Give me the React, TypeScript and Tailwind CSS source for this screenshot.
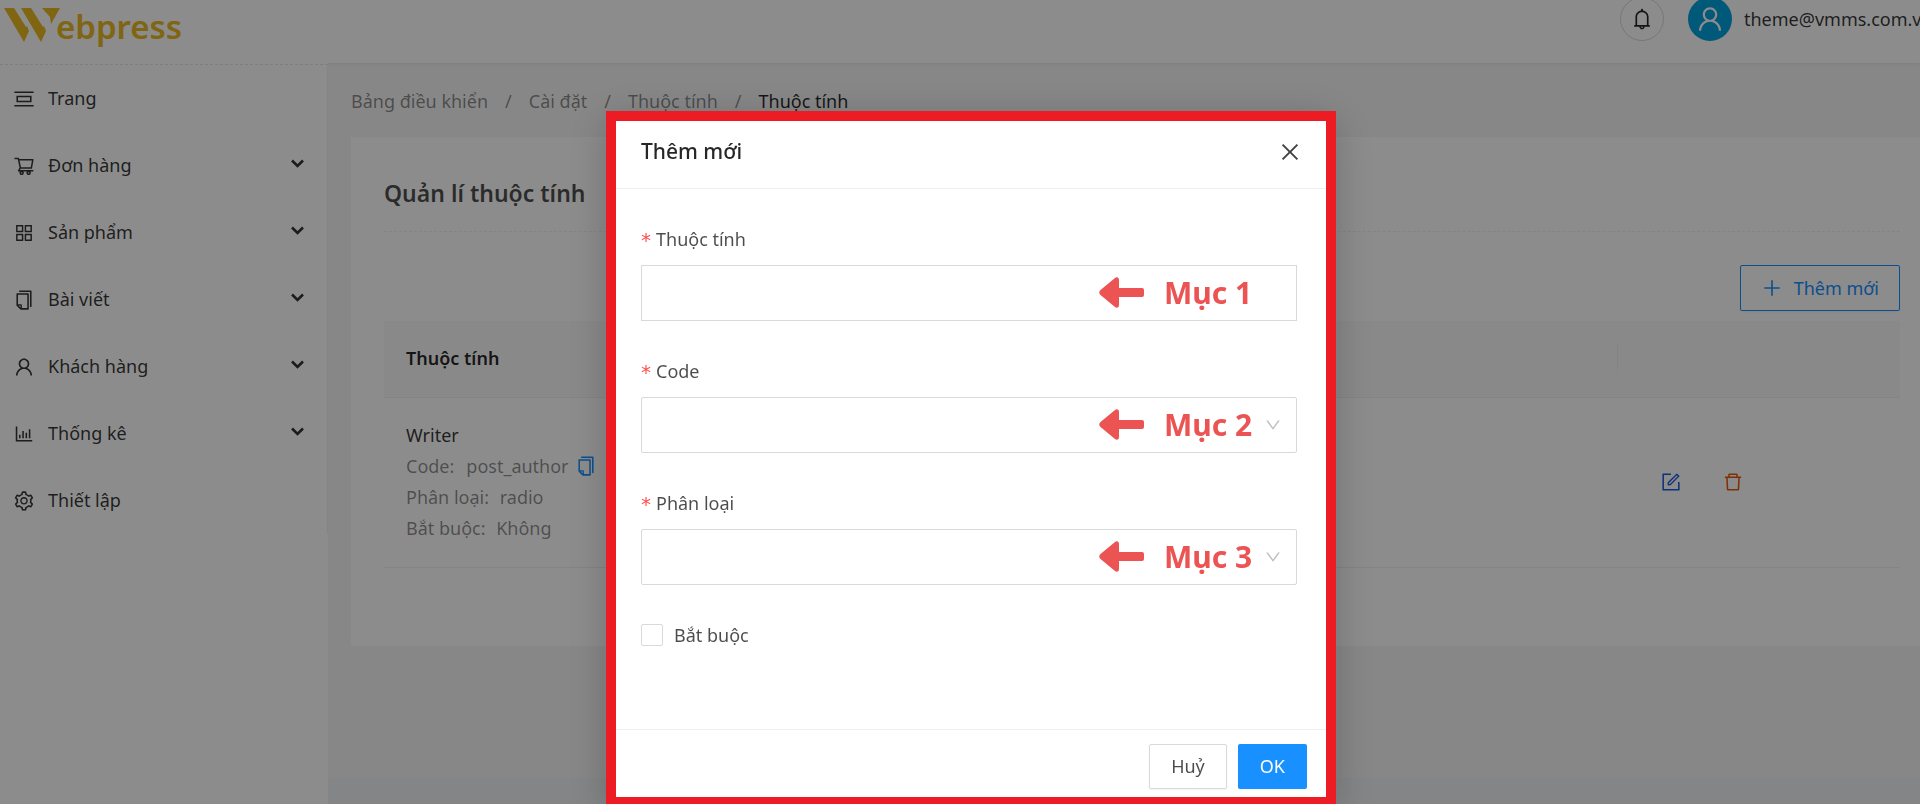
import type { ReactNode } from "react";
import type { IconType } from "react-icons";
import {
  AiOutlineAppstore,
  AiOutlineBarChart,
  AiOutlineBell,
  AiOutlineClose,
  AiOutlineCopy,
  AiOutlineDelete,
  AiOutlineDown,
  AiOutlineForm,
  AiOutlinePicCenter,
  AiOutlinePlus,
  AiOutlineSetting,
  AiOutlineShoppingCart,
  AiOutlineUser,
} from "react-icons/ai";

type MenuItem = { label: string; icon: IconType; hasChildren?: boolean };

const menu: MenuItem[] = [
  { label: "Trang", icon: AiOutlinePicCenter },
  { label: "Đơn hàng", icon: AiOutlineShoppingCart, hasChildren: true },
  { label: "Sản phẩm", icon: AiOutlineAppstore, hasChildren: true },
  { label: "Bài viết", icon: AiOutlineCopy, hasChildren: true },
  { label: "Khách hàng", icon: AiOutlineUser, hasChildren: true },
  { label: "Thống kê", icon: AiOutlineBarChart, hasChildren: true },
  { label: "Thiết lập", icon: AiOutlineSetting },
];

const crumbs = ["Bảng điều khiển", "Cài đặt", "Thuộc tính"];

function Logo() {
  return (
    <a href="#" className="flex items-start pt-1 pl-1 text-[#e9b824]">
      <svg width="56" height="36" viewBox="0 0 56 36" className="mt-1 -mr-1 shrink-0" fill="currentColor">
        <path d="M0 0H10L22 19L23 18L25 23L20 34Z" />
        <path d="M17 0H27L39 19L40 18L42 23L37 34Z" />
        <path d="M38 0H56L47 16L46 9Z" />
      </svg>
      <span className="text-[33px] leading-[46px] font-semibold">ebpress</span>
    </a>
  );
}

function Header() {
  return (
    <header className="relative z-10 flex h-[63px] justify-between bg-white shadow-[0_1px_4px_rgba(0,21,41,0.08)]">
      <Logo />
      <div className="flex h-[38px] items-center">
        <button
          type="button"
          aria-label="Thông báo"
          className="flex size-11 items-center justify-center rounded-full border border-[#d9d9d9] text-black/85"
        >
          <AiOutlineBell className="size-6" />
        </button>
        <span className="ml-6 flex size-11 items-center justify-center rounded-full bg-[#00a2dc] text-white">
          <AiOutlineUser className="size-[30px]" />
        </span>
        <span className="ml-3 w-44 text-[18px] whitespace-nowrap text-black/80">theme@vmms.com.v</span>
      </div>
    </header>
  );
}

function Sidebar() {
  return (
    <nav className="relative z-10 w-[328px] shrink-0 bg-white pt-px">
      <ul className="border-t border-r border-t-[#e6e6e6] border-r-[#f0f0f0] [border-top-style:dashed]">
        {menu.map(({ label, icon: Icon, hasChildren }) => (
          <li key={label}>
            <a href="#" className="flex h-[67px] items-center pr-[23px] pl-[13px] text-[18px] text-black/80">
              <Icon className="mr-[13px] size-[22px]" />
              {label}
              {hasChildren && (
                <svg
                  width="13"
                  height="9"
                  viewBox="0 0 13 9"
                  className="mb-1 ml-auto"
                  fill="none"
                  stroke="currentColor"
                  strokeWidth="2.6"
                >
                  <path d="M1 1.500L6.500 7L12 1.500" />
                </svg>
              )}
            </a>
          </li>
        ))}
      </ul>
    </nav>
  );
}

function AttributeTable() {
  return (
    <table className="mt-[10px] w-full text-left text-[18px]">
      <thead className="bg-[#fafafa]">
        <tr className="h-[76px] border-b border-[#f0f0f0]">
          <th className="px-[22px] font-semibold text-black/85">Thuộc tính</th>
          <th className="w-[283px] p-0">
            <div className="h-[30px] border-l border-[#f0f0f0]" />
          </th>
        </tr>
      </thead>
      <tbody>
        <tr className="border-b border-[#f0f0f0]">
          <td className="px-[22px] pt-[22px] pb-[23px] leading-[31px] text-black/45">
            <p className="text-black/80">Writer</p>
            <p className="flex items-center">
              Code: <span className="ml-3">post_author</span>
              <button type="button" aria-label="Sao chép" className="ml-[6px] text-[#1890ff]">
                <AiOutlineCopy className="size-[22px]" />
              </button>
            </p>
            <p>
              Phân loại: <span className="ml-[6px]">radio</span>
            </p>
            <p>
              Bắt buộc: <span className="ml-[6px]">Không</span>
            </p>
          </td>
          <td className="p-0">
            <div className="flex gap-10 pl-[43px]">
              <button type="button" aria-label="Sửa" className="text-[#1d5ae0]">
                <AiOutlineForm className="size-[22px]" />
              </button>
              <button type="button" aria-label="Xoá" className="text-[#e8590c]">
                <AiOutlineDelete className="size-[22px]" />
              </button>
            </div>
          </td>
        </tr>
      </tbody>
    </table>
  );
}

function Content() {
  return (
    <main className="mb-[26px] min-w-0 flex-1 bg-[#f6f6f6] pb-6 pl-[23px]">
      <nav aria-label="Breadcrumb" className="flex h-[74px] items-center pt-[2px] text-[18px] text-black/45">
        {crumbs.map((crumb) => (
          <span key={crumb}>
            <a href="#">{crumb}</a>
            <span className="mx-[17px]">/</span>
          </span>
        ))}
        <span className="text-black/85">Thuộc tính</span>
      </nav>

      <section className="bg-white pr-5 pb-[78px] pl-[33px]">
        <h1 className="flex h-[95px] items-center border-b border-dashed border-[#f0f0f0] pt-[18px] text-[23px] font-semibold text-black/70">
          Quản lí thuộc tính
        </h1>
        <div className="mt-[33px] flex justify-end">
          <button
            type="button"
            className="flex h-[46px] items-center rounded-xs border border-[#1890ff] px-5 text-[18px] text-[#1890ff] shadow-xs"
          >
            <AiOutlinePlus className="mr-[11px] size-[22px]" />
            Thêm mới
          </button>
        </div>
        <AttributeTable />
      </section>
    </main>
  );
}

function Hint({ children }: { children: ReactNode }) {
  return (
    <span className="pointer-events-none absolute inset-y-0 right-[42px] flex w-[156px] items-center pb-[2px] text-[30px] font-bold text-[#ec5353]">
      <svg width="45" height="31" viewBox="0 0 45 31" className="mr-5" fill="currentColor">
        <path d="M16 1C18 -0.500 20 0.500 20 3V11H43Q45 11 45 13V18Q45 20 43 20H20V28C20 30.500 18 31.500 16 30L1.500 18Q-1 15.500 1.500 13Z" />
      </svg>
      {children}
    </span>
  );
}

function Field({ id, label, hint, select }: { id: string; label: string; hint: string; select?: boolean }) {
  const box = "block h-14 w-full appearance-none border border-[#d9d9d9] bg-white px-4 text-[18px] outline-none";
  return (
    <div className="mb-[33px]">
      <label htmlFor={id} className="flex h-[43px] items-center pb-2 text-[18px] text-black/70">
        <span className="mr-[5px] font-['DejaVu_Sans',sans-serif] text-[20px] text-[#ff4d4f]">*</span>
        {label}
      </label>
      <div className="relative">
        {select ? (
          <select id={id} className={`${box} rounded-xs`} defaultValue="">
            <option value="" />
          </select>
        ) : (
          <input id={id} type="text" className={box} />
        )}
        <Hint>{hint}</Hint>
        {select && (
          <AiOutlineDown className="pointer-events-none absolute top-[19px] right-[15px] size-[18px] text-black/25" />
        )}
      </div>
    </div>
  );
}

function AttributeDialog() {
  return (
    <div
      role="dialog"
      aria-modal="true"
      aria-labelledby="dialog-title"
      className="flex w-[730px] flex-col border-[10px] border-[#ed1c24] bg-white shadow-[0_8px_40px_rgba(0,0,0,0.2)]"
    >
      <div className="flex h-[68px] items-start justify-between border-b border-[#f0f0f0] pr-6 pl-[25px]">
        <h2 id="dialog-title" className="text-[21px] leading-[60px] font-medium text-black/85">
          Thêm mới
        </h2>
        <button type="button" aria-label="Đóng" className="mt-[19px] text-black/75">
          <AiOutlineClose className="size-6" />
        </button>
      </div>
      <form className="pt-[33px] pr-[29px] pl-[25px]">
        <Field id="name" label="Thuộc tính" hint="Mục 1" />
        <Field id="code" label="Code" hint="Mục 2" select />
        <Field id="type" label="Phân loại" hint="Mục 3" select />
        <label className="flex h-[34px] items-center gap-[11px] text-[18px] text-black/70">
          <input type="checkbox" className="size-[22px] appearance-none rounded-xs border border-[#d9d9d9]" />
          Bắt buộc
        </label>
      </form>
      <div className="mt-[77px] flex h-[68px] items-center justify-end gap-[11px] border-t border-[#f0f0f0] px-[19px] pt-[6px]">
        <button
          type="button"
          className="h-[45px] rounded-xs border border-[#d9d9d9] px-[21px] text-[18px] text-black/70 shadow-xs"
        >
          Huỷ
        </button>
        <button type="button" className="h-[45px] rounded-xs bg-[#1890ff] px-[22px] text-[18px] text-white shadow-xs">
          OK
        </button>
      </div>
    </div>
  );
}

export default function App() {
  return (
    <div className="flex h-screen flex-col overflow-hidden bg-[#f0f2f5] font-['Noto_Sans',sans-serif]">
      <Header />
      <div className="flex flex-1">
        <Sidebar />
        <Content />
      </div>
      <div className="fixed inset-0 z-20 flex items-start justify-center bg-black/45 pt-[111px] pl-[22px]">
        <AttributeDialog />
      </div>
    </div>
  );
}
